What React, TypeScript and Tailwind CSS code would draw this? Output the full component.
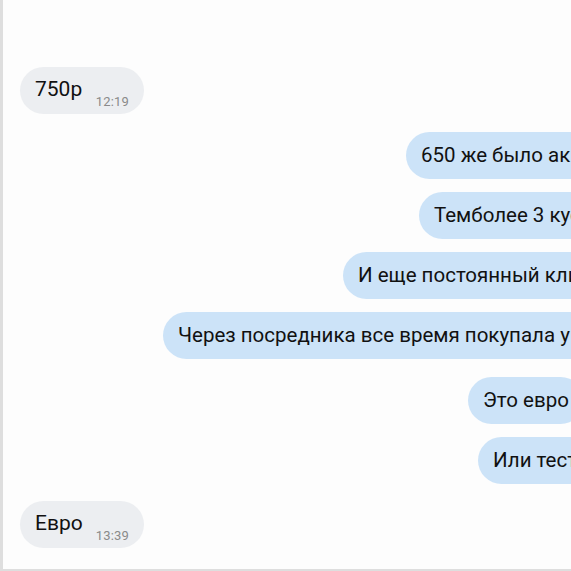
import React from "react";

type Msg = { text: string; ml: string; mt: string };

const outgoing: Msg[] = [
  { text: "650 же было акционная", ml: "ml-[403px]", mt: "mt-[18px]" },
  { text: "Темболее 3 куска", ml: "ml-[416px]", mt: "mt-[13px]" },
  { text: "И еще постоянный клиент", ml: "ml-[340px]", mt: "mt-[13px]" },
  { text: "Через посредника все время покупала у вас", ml: "ml-[160px]", mt: "mt-[13px]" },
  { text: "Это евро", ml: "ml-[465px]", mt: "mt-[18px]" },
  { text: "Или тест?", ml: "ml-[475px]", mt: "mt-[13px]" },
];

const Incoming = ({ text, time, mt }: { text: string; time: string; mt: string }) => (
  <div className={`${mt} ml-[17px] flex h-[47px] w-[124px] items-end rounded-full bg-[#eceef1] pb-[4px] pl-[15px]`}>
    <span className="mb-[9px] text-[21px] leading-6 text-[#111]">{text}</span>
    <span className="ml-auto mr-[15px] text-[13px] leading-4 tracking-[0.2px] text-[#8a8a8a]">{time}</span>
  </div>
);

const App = () => {
  return (
    <div className="h-[571px] w-[571px] overflow-hidden border-b-2 border-l-[3px] border-[#dedede] bg-[#fdfdfd] font-['Roboto',sans-serif]">
      <div className="pt-[67px]">
        <Incoming text="750р" time="12:19" mt="mt-0" />
        {outgoing.map((m, i) => (
          <div
            key={i}
            className={`${m.mt} ${m.ml} flex h-[47px] w-max items-center whitespace-nowrap rounded-full bg-[#cce3f8] px-[15px] text-[20.5px] text-[#111]`}
          >
            {m.text}
          </div>
        ))}
        <Incoming text="Евро" time="13:39" mt="mt-[17px]" />
      </div>
    </div>
  );
};

export default App;
